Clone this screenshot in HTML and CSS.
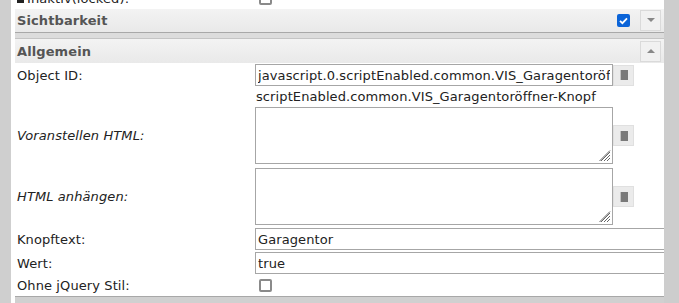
FILE: index.html
```html
<!DOCTYPE html>
<html lang="de">
<head>
  <meta charset="UTF-8">
  <title>Widget Attribute</title>
  <link rel="stylesheet" href="styles.css">
</head>
<body>
  <div class="page">
    <div class="gutter"></div>

    <div class="panel">
      <!-- row above, scrolled half out of view -->
      <div class="row row-cut">
        <label class="lbl">
          <svg class="lock" width="7" height="8" viewBox="0 0 7 8"><rect x="0" y="3" width="7" height="5" fill="#222"/><path d="M1.5 3.5V2a2 2 0 0 1 4 0v1.5" fill="none" stroke="#222" stroke-width="1.2"/></svg>Inaktiv(locked):
        </label>
        <div class="field"><span class="check"></span></div>
      </div>

      <!-- Sichtbarkeit (collapsed) -->
      <div class="group-head">
        <span class="group-title">Sichtbarkeit</span>
        <span class="check on">
          <svg width="13" height="13" viewBox="0 0 13 13"><path d="M3 6.8l2.4 2.4L10 4.3" fill="none" stroke="#fff" stroke-width="1.8"/></svg>
        </span>
        <button class="toggle" type="button">
          <svg width="8" height="5" viewBox="0 0 8 5"><path d="M0 0h8L4 4z" fill="#888"/></svg>
        </button>
      </div>
      <div class="group-closed"></div>

      <!-- Allgemein -->
      <div class="group-head group-head-open">
        <span class="group-title">Allgemein</span>
        <button class="toggle" type="button">
          <svg width="8" height="5" viewBox="0 0 8 5"><path d="M0 4h8L4 0z" fill="#888"/></svg>
        </button>
      </div>

      <div class="row row-id">
        <label class="lbl">Object ID:</label>
        <div class="field">
          <input class="inp" type="text" value="javascript.0.scriptEnabled.common.VIS_Garagentoröffner-Knopf">
          <button class="pick" type="button">
            <svg width="8" height="10" viewBox="0 0 8 10"><rect x="1" y="0" width="7" height="10" fill="#7a7a7a"/><path d="M0 1h1M0 3h1M0 5h1M0 7h1M0 9h1" stroke="#9a9a9a" stroke-width="1"/></svg>
          </button>
        </div>
      </div>
      <div class="hint">scriptEnabled.common.VIS_Garagentoröffner-Knopf</div>

      <div class="row row-area">
        <label class="lbl lbl-i">Voranstellen HTML:</label>
        <div class="field">
          <div class="area-wrap">
            <textarea class="area"></textarea>
            <svg class="grip" width="12" height="12" viewBox="0 0 12 12"><path d="M11 2L2 11M11 5L5 11M11 8L8 11M11 0.5L0.5 11" stroke="#666" stroke-width="1"/></svg>
          </div>
          <button class="pick" type="button">
            <svg width="8" height="10" viewBox="0 0 8 10"><rect x="1" y="0" width="7" height="10" fill="#7a7a7a"/><path d="M0 1h1M0 3h1M0 5h1M0 7h1M0 9h1" stroke="#9a9a9a" stroke-width="1"/></svg>
          </button>
        </div>
      </div>

      <div class="row row-area row-area-2">
        <label class="lbl lbl-i">HTML anhängen:</label>
        <div class="field">
          <div class="area-wrap">
            <textarea class="area"></textarea>
            <svg class="grip" width="12" height="12" viewBox="0 0 12 12"><path d="M11 2L2 11M11 5L5 11M11 8L8 11M11 0.5L0.5 11" stroke="#666" stroke-width="1"/></svg>
          </div>
          <button class="pick" type="button">
            <svg width="8" height="10" viewBox="0 0 8 10"><rect x="1" y="0" width="7" height="10" fill="#7a7a7a"/><path d="M0 1h1M0 3h1M0 5h1M0 7h1M0 9h1" stroke="#9a9a9a" stroke-width="1"/></svg>
          </button>
        </div>
      </div>

      <div class="row row-text">
        <label class="lbl">Knopftext:</label>
        <div class="field"><input class="inp inp-wide" type="text" value="Garagentor"></div>
      </div>
      <div class="row row-text row-text-2">
        <label class="lbl">Wert:</label>
        <div class="field"><input class="inp inp-wide" type="text" value="true"></div>
      </div>
      <div class="row row-check">
        <label class="lbl">Ohne jQuery Stil:</label>
        <div class="field"><span class="check"></span></div>
      </div>

      <div class="group-foot"></div>
    </div>

    <div class="scrollbar"></div>
  </div>
</body>
</html>
```

FILE: styles.css
```css
body {
  margin: 0;
  padding: 0;
  background: #fff;
  font-family: "DejaVu Sans", Verdana, sans-serif;
  font-size: 13px;
  letter-spacing: 0.1px;
  color: #222;
  overflow: hidden;
}
.page {
  display: flex;
  height: 303px;
  overflow: hidden;
}
.gutter {
  width: 11px;
  flex: none;
  background: #cfcfcf;
}
.panel {
  flex: 1;
  min-width: 0;
  padding-left: 4px;
  overflow: hidden;
}
.scrollbar {
  width: 15px;
  flex: none;
  background: #cdcdcd;
}

/* rows */
.row {
  display: flex;
  align-items: center;
}
.lbl {
  width: 238px;
  flex: none;
  padding-left: 2px;
  white-space: nowrap;
}
.lbl-i {
  font-style: italic;
}
.field {
  flex: 1;
  min-width: 0;
  display: flex;
  align-items: center;
}
.row-cut {
  height: 22px;
  margin-top: -13px;
}
.lock {
  margin-right: 3px;
  vertical-align: 0;
}

/* group headers */
.group-head {
  display: flex;
  align-items: center;
  height: 23px;
  background: linear-gradient(#f3f3f3, #e9e9e9);
  padding-right: 3px;
}
.group-head-open {
  height: 24px;
}
.group-title {
  flex: 1;
  padding-left: 2px;
  font-weight: bold;
  color: #555;
}
.group-closed {
  height: 5px;
  background: #dcdcdc;
  border-top: 1px solid #a8a8a8;
  border-bottom: 1px solid #c4c4c4;
}
.group-foot {
  height: 7px;
  background: #d0d0d0;
  border-top: 1px solid #a8a8a8;
}
.toggle {
  width: 21px;
  height: 21px;
  padding: 0;
  background: #f1f1f1;
  border: 1px solid #dadada;
  display: flex;
  align-items: center;
  justify-content: center;
}
.check {
  display: inline-block;
  box-sizing: border-box;
  width: 13px;
  height: 13px;
  border: 2px solid #8a8a8a;
  border-radius: 2px;
  margin-left: 4px;
  background: #fff;
}
.check.on {
  border: none;
  background: #0b64d8;
  margin: 0 10px 0 0;
}
.check.on svg {
  display: block;
}

/* inputs */
.inp {
  box-sizing: border-box;
  width: 358px;
  height: 22px;
  margin: 0;
  padding: 0 2px;
  border: 1px solid #a6a6a6;
  font-family: inherit;
  font-size: 13px;
  letter-spacing: 0.1px;
  color: #222;
  outline: none;
}
.inp-wide {
  width: 440px;
  flex: none;
}
.pick {
  width: 21px;
  height: 21px;
  padding: 0;
  background: #ebebeb;
  border: 1px solid #e0e0e0;
  display: flex;
  align-items: center;
  justify-content: center;
}
.row-id {
  margin-top: 1px;
  height: 22px;
}
.hint {
  margin-top: 1px;
  height: 20px;
  line-height: 20px;
  padding-left: 241px;
  white-space: nowrap;
}
.row-area {
  height: 57px;
}
.row-area-2 {
  margin-top: 4px;
}
.area-wrap {
  position: relative;
  width: 358px;
  height: 57px;
}
.area {
  box-sizing: border-box;
  display: block;
  width: 358px;
  height: 57px;
  margin: 0;
  border: 1px solid #a6a6a6;
  resize: none;
  outline: none;
}
.grip {
  position: absolute;
  right: 2px;
  bottom: 2px;
}
.row-text {
  margin-top: 3px;
  height: 22px;
}
.row-text-2 {
  margin-top: 2px;
}
.row-check {
  height: 22px;
}
```
